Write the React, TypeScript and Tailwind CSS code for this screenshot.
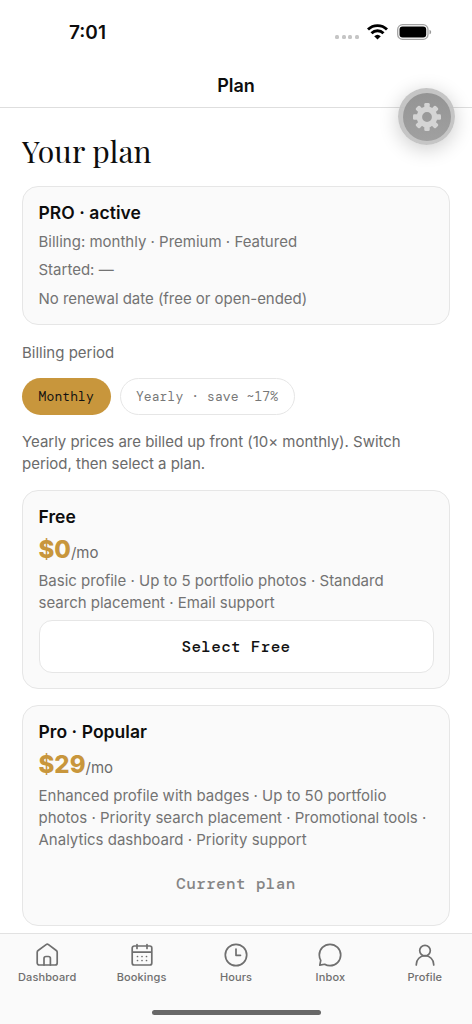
import type { ReactNode } from 'react';

interface Plan {
  name: string;
  price: string;
  features: ReactNode;
  current?: boolean;
}

const plans: Plan[] = [
  {
    name: 'Free',
    price: '$0',
    features: (
      <>
        Basic profile · Up to 5 portfolio photos · Standard
        <br />
        search placement · Email support
      </>
    ),
  },
  {
    name: 'Pro · Popular',
    price: '$29',
    features: (
      <>
        Enhanced profile with badges · Up to 50 portfolio
        <br />
        photos · Priority search placement · Promotional tools ·
        <br />
        Analytics dashboard · Priority support
      </>
    ),
    current: true,
  },
];

const tabs: { label: string; icon: ReactNode }[] = [
  {
    label: 'Dashboard',
    icon: (
      <>
        <path d="M9 22v-6.500a2 2 0 0 1 2-2h2.400a2 2 0 0 1 2 2V22" />
        <path d="M2.200 9.200V20a2 2 0 0 0 2 2h16a2 2 0 0 0 2-2V9.200a2 2 0 0 0-.9-1.700l-7.800-5.900a2 2 0 0 0-2.400 0L3.100 7.500a2 2 0 0 0-.9 1.700Z" />
      </>
    ),
  },
  {
    label: 'Bookings',
    icon: (
      <>
        <path d="M17 1.500v4M7 1.500v4M2.200 9.200h19.600M4.200 3h15.600a2 2 0 0 1 2 2V20a2 2 0 0 1-2 2H4.200a2 2 0 0 1-2-2V5a2 2 0 0 1 2-2Z" />
        <path d="M7.500 13.500h.01M12 13.500h.01M16.500 13.500h.01M7.500 17.500h.01M12 17.500h.01M16.500 17.500h.01" />
      </>
    ),
  },
  {
    label: 'Hours',
    icon: (
      <>
        <circle cx="12" cy="12" r="10.700" />
        <path d="M12 6v6.300h4.500" />
      </>
    ),
  },
  {
    label: 'Inbox',
    icon: (
      <path d="M12 22.700c5.900 0 10.700-4.800 10.700-10.700S17.900 1.300 12 1.300 1.300 6.100 1.300 12c0 1.950.52 3.780 1.440 5.350L1.800 22.200l4.850-.94A10.650 10.650 0 0 0 12 22.700Z" />
    ),
  },
  {
    label: 'Profile',
    icon: (
      <>
        <circle cx="12" cy="7.600" r="5.300" />
        <path d="M3.300 22v-.6a8.700 8.700 0 0 1 17.400 0v.6" />
      </>
    ),
  },
];

function StatusBar() {
  return (
    <div className="flex h-16 items-center justify-between pr-[40px] pl-[69px]">
      <span className="text-[19px] leading-none font-semibold">7:01</span>
      <div className="flex items-center">
        <div className="mt-[10px] mr-[8px] flex gap-[2.700px]">
          <span className="size-1 rounded-[1.5px] bg-[#c5c5c5]" />
          <span className="size-1 rounded-[1.5px] bg-[#c5c5c5]" />
          <span className="size-1 rounded-[1.5px] bg-[#c5c5c5]" />
          <span className="size-1 rounded-[1.5px] bg-[#c5c5c5]" />
        </div>
        <svg viewBox="0 0 21 16" className="mr-[9px] h-4 w-[21px]">
          <g fill="none" stroke="#000" strokeWidth="2.900">
            <path d="M1 5.500a13.600 13.600 0 0 1 19 0" />
            <path d="M4.500 9.200a8.600 8.600 0 0 1 12 0" />
          </g>
          <path d="M7.200 12.300a4.800 4.800 0 0 1 6.600 0L10.500 15.600Z" fill="#000" />
        </svg>
        <svg viewBox="0 0 35 16" className="h-4 w-[35px]">
          <rect x=".7" y=".7" width="30.300" height="14.600" rx="4.800" fill="none" stroke="#a3a3a3" strokeWidth="1.300" />
          <rect x="2.500" y="2.500" width="26.700" height="11" rx="3" fill="#000" />
          <path d="M32.500 5.700c2.200.8 2.200 3.800 0 4.600Z" fill="#999" />
        </svg>
      </div>
    </div>
  );
}

function SettingsButton() {
  return (
    <button className="absolute top-[88px] left-[398px] flex size-[57px] items-center justify-center rounded-full bg-[#bfbfbf]/90 shadow-[0_4px_20px_rgba(0,0,0,0.2)]">
      <span className="flex size-[48px] items-center justify-center rounded-full bg-linear-to-b from-[#949494] to-[#a0a0a0]">
        <svg viewBox="-14 -14 28 28" className="size-7">
          <g fill="#d4d4d4">
            <path
              fillRule="evenodd"
              d="M0-10.400a10.400 10.400 0 1 0 0 20.800a10.400 10.400 0 1 0 0-20.800ZM0-4.900a4.900 4.900 0 1 1 0 9.800a4.900 4.900 0 1 1 0-9.800Z"
            />
            {[0, 45, 90, 135, 180, 225, 270, 315].map((angle) => (
              <rect key={angle} x="-2.700" y="-14" width="5.400" height="6" rx="1.300" transform={`rotate(${angle})`} />
            ))}
          </g>
        </svg>
      </span>
    </button>
  );
}

function PlanCard({ plan }: { plan: Plan }) {
  return (
    <section className="rounded-[16px] border border-[#e6e6e6] bg-[#fafafa] px-[15.500px] pt-[15px] pb-[15px]">
      <h2 className="text-[17.500px] leading-[22px] font-semibold tracking-[0.05px]">{plan.name}</h2>
      <p className="mt-[6px] flex h-[32px] items-baseline">
        <span className="text-[24px] leading-[32px] font-extrabold text-[#c8963c]">{plan.price}</span>
        <span className="text-[15px] text-[#6b6b6b]">/mo</span>
      </p>
      <p className="mt-[4px] text-[15px] leading-[22px] whitespace-nowrap text-[#737373]">{plan.features}</p>
      {plan.current ? (
        <div className="mt-[6px] flex h-[53px] items-center justify-center font-['DM_Mono','Liberation_Mono',monospace] text-[16px] font-medium tracking-[0.35px] text-[#858585]">
          Current plan
        </div>
      ) : (
        <button className="mt-[6px] flex h-[53px] w-full items-center justify-center rounded-[13px] border border-[#e6e6e6] bg-white font-['DM_Mono','Liberation_Mono',monospace] text-[16px] font-medium tracking-[0.3px] text-[#111]">
          Select Free
        </button>
      )}
    </section>
  );
}

export default function App() {
  return (
    <div className="relative flex h-[1024px] w-[472px] flex-col overflow-hidden bg-white font-['Inter',sans-serif] text-[#0d0d0d]">
      <StatusBar />
      <header className="flex h-11 shrink-0 items-center justify-center border-b border-[#dedede]">
        <h1 className="text-[18px] font-semibold tracking-[-0.1px]">Plan</h1>
      </header>

      <main className="min-h-0 flex-1 overflow-hidden px-[22px]">
        <h2 className="mt-[23px] font-['Playfair_Display','Liberation_Serif',serif] text-[30px] leading-[40px] tracking-[0.1px] whitespace-nowrap">
          Your plan
        </h2>

        {/* Current subscription */}
        <section className="mt-[15px] h-[139px] rounded-[16px] border border-[#e6e6e6] bg-[#fafafa] px-[15.500px] pt-[15px] text-[15px] leading-[22px] text-[#737373]">
          <h3 className="text-[17.500px] leading-[22px] font-semibold tracking-[0.05px] text-[#0d0d0d]">
            PRO · active
          </h3>
          <p className="mt-[7px]">Billing: monthly · Premium · Featured</p>
          <p className="mt-[6px]">Started: —</p>
          <p className="mt-[7px] tracking-[-0.03px]">No renewal date (free or open-ended)</p>
        </section>

        {/* Billing period */}
        <p className="mt-[17px] text-[15px] leading-[22px] text-[#6b6b6b]">Billing period</p>
        <div className="mt-[14px] flex gap-[9px] font-['DM_Mono','Liberation_Mono',monospace] text-[13px] tracking-[0.1px]">
          <button className="h-[37px] w-[88.500px] rounded-full bg-[#c8963c] text-[#111]">Monthly</button>
          <button className="h-[37px] w-[175px] rounded-full border border-[#e6e6e6] text-[#777]">
            Yearly · save ~17%
          </button>
        </div>
        <p className="mt-[16px] text-[15px] leading-[22px] tracking-[-0.02px] whitespace-nowrap text-[#6b6b6b]">
          Yearly prices are billed up front (10× monthly). Switch
          <br />
          period, then select a plan.
        </p>

        <div className="mt-[15px] flex flex-col gap-4">
          {plans.map((plan) => (
            <PlanCard key={plan.name} plan={plan} />
          ))}
        </div>
      </main>

      <nav className="flex h-[91px] shrink-0 flex-col border-t border-[#e2e2e2] bg-[#fafafa]">
        <div className="grid grid-cols-5 pt-[9px]">
          {tabs.map((tab) => (
            <button key={tab.label} className="flex flex-col items-center text-[#6f6f6f]">
              <svg
                viewBox="0 0 24 24"
                className="size-6"
                fill="none"
                stroke="currentColor"
                strokeWidth="1.700"
                strokeLinecap="round"
                strokeLinejoin="round"
              >
                {tab.icon}
              </svg>
              <span className="mt-[3px] text-[11px] leading-[14px] font-medium tracking-[0.12px]">{tab.label}</span>
            </button>
          ))}
        </div>
        <div className="mx-auto mt-auto mb-[9px] h-[5px] w-[169px] rounded-full bg-[#686868]" />
      </nav>

      <SettingsButton />
    </div>
  );
}
